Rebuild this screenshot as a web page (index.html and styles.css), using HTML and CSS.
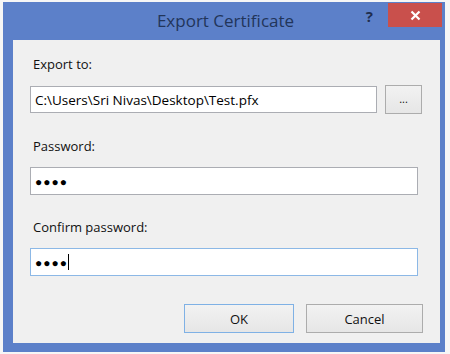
FILE: index.html
```html
<!DOCTYPE html>
<html lang="en">
<head>
  <meta charset="UTF-8">
  <title>Export Certificate</title>
  <link rel="stylesheet" href="styles.css">
</head>
<body>
  <div class="window">
    <div class="titlebar">
      <span class="title">Export Certificate</span>
      <span class="help">?</span>
      <button class="close" aria-label="Close">
        <svg width="11" height="11" viewBox="0 0 11 11"><path d="M1.5 1.5l8 8M9.5 1.5l-8 8" stroke="#fff" stroke-width="2.2" fill="none"/></svg>
      </button>
    </div>

    <div class="client">
      <!-- Export path -->
      <div class="label">Export to:</div>
      <div class="row">
        <div class="field path">C:\Users\Sri Nivas\Desktop\Test.pfx</div>
        <button class="btn browse">...</button>
      </div>

      <!-- Passwords -->
      <div class="label">Password:</div>
      <div class="field wide"><span class="dots">●●●●</span></div>

      <div class="label">Confirm password:</div>
      <div class="field wide focused"><span class="dots">●●●●</span><span class="caret"></span></div>

      <div class="actions">
        <button class="btn default">OK</button>
        <button class="btn cancel">Cancel</button>
      </div>
    </div>
  </div>
</body>
</html>
```

FILE: styles.css
```css
*, *::before, *::after { box-sizing: border-box; }
body {
  margin: 0; background: #f6f6f6;
  font-family: "Open Sans", "Noto Sans", sans-serif;
  width: 450px; height: 354px; overflow: hidden;
}
.window {
  margin: 2px 0 0 3px; width: 442px; height: 350px;
  background: #5c80c9;
  padding: 0 5px 9px 10px;
  display: flex; flex-direction: column;
}
.titlebar {
  height: 38px; position: relative;
  display: flex; justify-content: center; align-items: center;
}
.title { font-size: 17px; color: #22355a; margin-left: -2px; padding-bottom: 2px; }
.help {
  position: absolute; right: 67px; top: 4px;
  font-size: 15px; font-weight: bold; color: #1f2e4f;
}
.close {
  position: absolute; right: -2px; top: 1px;
  width: 54px; height: 24px; border: none; margin: 0; padding: 0;
  background: #c9504c;
  display: flex; align-items: center; justify-content: center;
}
.client {
  flex: 1; background: #f0f0f0;
  padding: 16px 17px 0 17px;
  display: flex; flex-direction: column;
}
.label { font-size: 13px; line-height: 17px; color: #111; margin: 0 0 12px 3px; }
.row { display: flex; gap: 8px; align-items: center; margin-bottom: 24px; }
.field {
  height: 27px; background: #fff; border: 1px solid #abadb3;
  font-size: 13.5px; color: #000; padding: 0 4px;
  display: flex; align-items: center;
}
.path { width: 347px; }
.wide { width: 388px; margin-bottom: 24px; height: 28px; }
.focused { border-color: #8cb8e6; }
.dots { font-size: 12px; letter-spacing: 1px; color: #000; }
.caret { width: 1px; height: 16px; background: #000; margin-left: 0; }
.btn {
  font-family: inherit; font-size: 13px; color: #111;
  background: linear-gradient(#f2f2f2, #e6e6e6);
  border: 1px solid #acacac; margin: 0; padding: 0;
}
.browse { width: 37px; height: 29px; font-size: 11px; padding-bottom: 3px; }
.actions { display: flex; justify-content: flex-end; gap: 12px; margin-top: 4px; }
.default { width: 110px; height: 29px; border-color: #7fb1e5; }
.cancel { width: 117px; height: 29px; }
```
